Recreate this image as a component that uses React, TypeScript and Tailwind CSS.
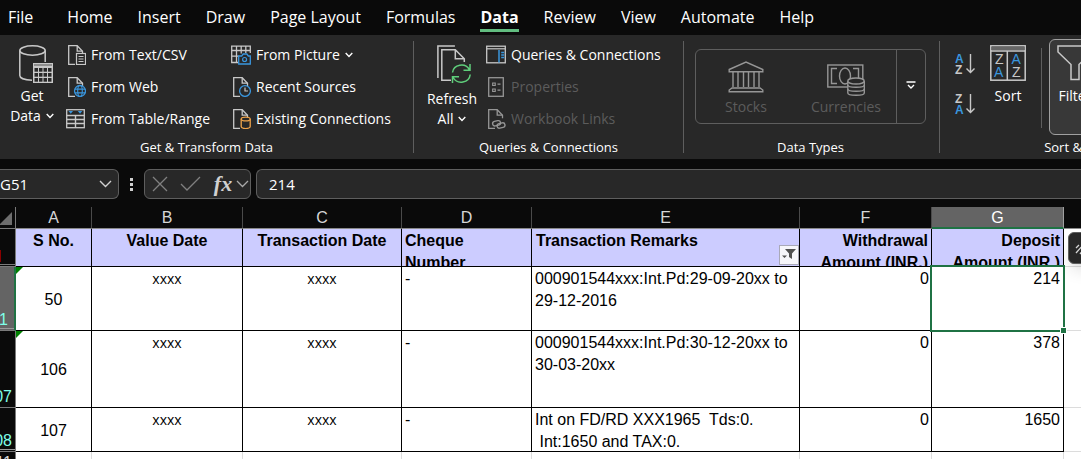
import type { ReactNode } from "react";

const LIGHT = "#c8c8c8";
const DIM = "#969696";
const BLUE = "#3a96dd";
const GREEN = "#5fce7b";
const ORANGE = "#f0a54b";
const PANEL = "#282828";

type IconProps = { children: ReactNode; w?: number; h?: number };

function Icon({ children, w = 20, h = 20 }: IconProps) {
  return (
    <svg width={w} height={h} viewBox={`0 0 ${w} ${h}`} fill="none" aria-hidden="true" className="shrink-0">
      {children}
    </svg>
  );
}

function Page({ color = LIGHT }: { color?: string }) {
  return (
    <>
      <path d="M9 19.3H2.7V.7h8.5l5.3 5.5v3" stroke={color} strokeWidth="1.3" />
      <path d="M11.2.7v5.5h5.3" stroke={color} strokeWidth="1.3" />
    </>
  );
}

function Caret() {
  return (
    <svg width="8" height="6" viewBox="0 0 8 6" fill="none" aria-hidden="true" className="shrink-0">
      <path d="M.7 1L4 4.4 7.3 1" stroke="#fff" strokeWidth="1.4" />
    </svg>
  );
}

function GetDataIcon() {
  return (
    <Icon w={34} h={38}>
      <path d="M13 35.2C5.500 35 .8 33 .8 30.500V5.500M26.200 5.500V17" stroke={LIGHT} strokeWidth="1.500" />
      <ellipse cx="13.500" cy="5.500" rx="12.700" ry="4.700" stroke={LIGHT} strokeWidth="1.500" />
      <rect x="14" y="18" width="20" height="20" fill={LIGHT} />
      <path d="M15 20h18" stroke="#555" strokeWidth="1" />
      {[23, 28, 33].map((y) =>
        [15.5, 20, 24.5, 29].map((x) => <rect key={`${x}-${y}`} x={x} y={y} width="3.500" height="3.700" fill={PANEL} />),
      )}
    </Icon>
  );
}

function TextFileIcon() {
  return (
    <Icon>
      <Page />
      <rect x="10.500" y="8.500" width="9" height="11" fill={PANEL} stroke={LIGHT} strokeWidth="1.200" />
      <path d="M12.500 11.500h5M12.500 14h5M12.500 16.500h5" stroke={LIGHT} />
    </Icon>
  );
}

function WebIcon() {
  return (
    <Icon>
      <Page />
      <circle cx="14" cy="14" r="5.500" fill={PANEL} stroke={BLUE} strokeWidth="1.300" />
      <ellipse cx="14" cy="14" rx="2.300" ry="5.500" stroke={BLUE} strokeWidth="1.100" />
      <path d="M9 12.200h10M9 15.800h10" stroke={BLUE} strokeWidth="1.200" />
    </Icon>
  );
}

function TableRangeIcon() {
  return (
    <Icon>
      <rect x=".7" y=".7" width="17.600" height="18" stroke={LIGHT} strokeWidth="1.300" />
      <path d="M.7 6.500h18M.7 10.500h18M.7 14.500h18M9.500 6.500v12" stroke={LIGHT} strokeWidth="1.400" />
      <path d="M2.500 2h4.500L4.750 4.700zM11.800 2h4.500l-2.250 2.700z" fill={BLUE} />
    </Icon>
  );
}

function PictureIcon() {
  return (
    <Icon>
      <path d="M7 17.500H.7V1.200h18.600V8M.7 5.500h18.600M.7 11.200h7M5.500 1v16.500M10.200 1v7.500M14.800 1v7" stroke={LIGHT} strokeWidth="1.300" />
      <path d="M7.700 11h3l1.500-2h3.600l1.500 2h2v8H7.700z" fill={PANEL} stroke={BLUE} strokeWidth="1.300" />
      <circle cx="13.600" cy="14.500" r="2" stroke={BLUE} strokeWidth="1.200" />
    </Icon>
  );
}

function RecentIcon() {
  return (
    <Icon>
      <Page />
      <circle cx="14" cy="14" r="5.400" fill={PANEL} stroke={BLUE} strokeWidth="1.300" />
      <path d="M14 10.500V14h3" stroke={LIGHT} strokeWidth="1.200" />
    </Icon>
  );
}

function ConnectionIcon() {
  return (
    <Icon>
      <Page />
      <path d="M10.200 10v7.500c0 2.700 9 2.700 9 0V10" fill={PANEL} stroke={ORANGE} strokeWidth="1.300" />
      <ellipse cx="14.700" cy="10" rx="4.500" ry="1.900" fill={PANEL} stroke={ORANGE} strokeWidth="1.300" />
    </Icon>
  );
}

function RefreshIcon() {
  return (
    <Icon w={34} h={38}>
      <path d="M.9 33V.9h17" stroke={LIGHT} strokeWidth="1.500" />
      <path d="M14 35.200H4.800V4.800h13.500l9 9V17M18.300 4.800v9h9" stroke={LIGHT} strokeWidth="1.500" />
      <path d="M15.500 27.500a9 8.500 0 0 1 16.800-3M33.200 29.500a9 8.500 0 0 1-17 3M33 19v6.200h-6.500M15.500 38v-6.200H22" stroke={GREEN} strokeWidth="1.500" />
    </Icon>
  );
}

function QueriesIcon() {
  return (
    <Icon>
      <rect x=".7" y="1.200" width="18.600" height="16.600" stroke={LIGHT} strokeWidth="1.300" />
      <path d="M.7 3.800h18.600" stroke={LIGHT} strokeWidth="1.200" />
      <path d="M13 5v12.500" stroke={BLUE} strokeWidth="1.500" />
      <path d="M15.200 7.500h3M15.200 10h3M15.200 12.500h3" stroke={BLUE} strokeWidth="1.300" />
    </Icon>
  );
}

function PropertiesIcon() {
  return (
    <Icon>
      <rect x="2.700" y=".7" width="14.600" height="18.600" stroke={DIM} strokeWidth="1.300" />
      <path d="M6.700 6h2.500v2.500H6.700zM6.700 12h2.500v2.500H6.700zM11.500 7.200h3M11.500 13.200h3" stroke={DIM} strokeWidth="1.200" />
    </Icon>
  );
}

function LinksIcon() {
  return (
    <Icon>
      <Page color={DIM} />
      <g stroke={DIM} strokeWidth="1.400" fill={PANEL}>
        <rect x="6.500" y="12" width="8" height="4.600" rx="2.300" transform="rotate(-12 10.500 14)" />
        <rect x="11" y="14.200" width="8" height="4.600" rx="2.300" transform="rotate(-12 15 16.500)" fill="none" />
      </g>
    </Icon>
  );
}

function StocksIcon() {
  return (
    <Icon w={36} h={32}>
      <g stroke={DIM} strokeWidth="1.400">
        <path d="M1.200 8.500L18 1l16.800 7.500v2.300H1.200z" />
        <path d="M5 11v15M10 11v15M15.500 11v15M20.500 11v15M26 11v15M31 11v15" />
        <path d="M4 27h28l2.800 2v1.800H1.200V29z" />
      </g>
    </Icon>
  );
}

function CurrenciesIcon() {
  return (
    <Icon w={38} h={32}>
      <g stroke={DIM} strokeWidth="1.400">
        <rect x=".8" y="1" width="35" height="22" />
        <path d="M10 4.500H4.500v15H10M26 4.500h5.500V14" />
        <ellipse cx="18" cy="12" rx="5.500" ry="8" />
        <path d="M20.800 17v12c0 3 16.500 3 16.500 0V17" fill={PANEL} />
        <ellipse cx="29" cy="17" rx="8.200" ry="3" fill={PANEL} />
        <path d="M20.800 21c0 3 16.500 3 16.500 0M20.800 25c0 3 16.500 3 16.500 0" />
      </g>
    </Icon>
  );
}

function SortDirectionIcon({ top, bottom, topColor, bottomColor }: { top: string; bottom: string; topColor: string; bottomColor: string }) {
  return (
    <svg width="21" height="24" viewBox="0 0 21 24" fill="none" aria-hidden="true" fontFamily="Liberation Sans, sans-serif" fontSize="12" fontWeight="700" className="overflow-visible">
      <text x="0" y="10" fill={topColor}>{top}</text>
      <text x="0" y="21" fill={bottomColor}>{bottom}</text>
      <path d="M15.500 1v18.500M11.500 15.500l4 4 4-4" stroke={LIGHT} strokeWidth="1.400" />
    </svg>
  );
}

function SortIcon() {
  return (
    <svg width="36" height="36" viewBox="0 0 36 36" fill="none" aria-hidden="true" fontFamily="Liberation Sans, sans-serif" fontSize="14">
      <rect x=".8" y=".8" width="34.400" height="34.400" stroke={LIGHT} strokeWidth="1.500" />
      <path d="M1.500 3.200h33" stroke="#666" strokeWidth="3.500" />
      <path d="M.8 6h34.400M17.300 6v29" stroke={LIGHT} strokeWidth="1.500" />
      <text x="5" y="19" fill={LIGHT}>Z</text>
      <text x="4" y="32" fill={BLUE}>A</text>
      <text x="21.500" y="19" fill={BLUE}>A</text>
      <text x="22" y="32" fill={LIGHT}>Z</text>
    </svg>
  );
}

function FilterIcon() {
  return (
    <Icon w={36} h={36}>
      <path d="M1 1h34v6L22 19.500v15h-8v-15L1 7z" stroke={LIGHT} strokeWidth="1.500" />
    </Icon>
  );
}

const tabs = ["File", "Home", "Insert", "Draw", "Page Layout", "Formulas", "Data", "Review", "View", "Automate", "Help"];

function TabBar() {
  return (
    <nav className="flex h-[35px] items-start gap-[25px] overflow-hidden pl-2">
      {tabs.map((tab) => (
        <button
          key={tab}
          className={
            tab === "Data"
              ? "h-8 shrink-0 border-b-3 border-[#62bd80] pt-1 text-base leading-6 font-bold"
              : tab === "File"
                ? "mr-[9px] h-8 shrink-0 border-b-3 border-transparent pt-1 text-base leading-6"
                : "h-8 shrink-0 border-b-3 border-transparent pt-1 text-base leading-6"
          }
        >
          {tab}
        </button>
      ))}
    </nav>
  );
}

function Command({ icon, label, disabled, menu }: { icon: ReactNode; label: string; disabled?: boolean; menu?: boolean }) {
  return (
    <button disabled={disabled} className="flex h-8 items-center gap-[5px] text-sm whitespace-nowrap disabled:text-[#5c5c5c]">
      {icon}
      {label}
      {menu && <Caret />}
    </button>
  );
}

function Group({ label, className, children }: { label: string; className: string; children: ReactNode }) {
  return (
    <section aria-label={label} className={`flex shrink-0 flex-col pt-1 ${className}`}>
      <div className="flex h-24">{children}</div>
      <h2 className="text-center text-[13px] leading-6 whitespace-nowrap">{label}</h2>
    </section>
  );
}

function Divider() {
  return <div className="my-[6px] w-px shrink-0 bg-[#5e5e5e]" />;
}

function Ribbon() {
  return (
    <div className="flex h-[124px] overflow-hidden bg-[#282828]">
      <Group label="Get & Transform Data" className="w-[413px]">
        <button className="mr-[2px] flex w-16 flex-col items-center pt-[6px] text-sm leading-5">
          <span className="pl-2"><GetDataIcon /></span>
          <span className="pt-[3px]">Get</span>
          <span className="flex items-center gap-[5px]">Data <Caret /></span>
        </button>
        <div className="flex w-[165px] flex-col">
          <Command icon={<TextFileIcon />} label="From Text/CSV" />
          <Command icon={<WebIcon />} label="From Web" />
          <Command icon={<TableRangeIcon />} label="From Table/Range" />
        </div>
        <div className="flex flex-col">
          <Command icon={<PictureIcon />} label="From Picture" menu />
          <Command icon={<RecentIcon />} label="Recent Sources" />
          <Command icon={<ConnectionIcon />} label="Existing Connections" />
        </div>
      </Group>
      <Divider />
      <Group label="Queries & Connections" className="w-[269px]">
        <button className="flex w-[72px] flex-col items-center pt-[6px] pl-1 text-sm leading-5">
          <span className="pl-1"><RefreshIcon /></span>
          <span className="pt-[6px]">Refresh</span>
          <span className="flex items-center gap-[5px]">All <Caret /></span>
        </button>
        <div className="flex flex-col">
          <Command icon={<QueriesIcon />} label="Queries & Connections" />
          <Command icon={<PropertiesIcon />} label="Properties" disabled />
          <Command icon={<LinksIcon />} label="Workbook Links" disabled />
        </div>
      </Group>
      <Divider />
      <Group label="Data Types" className="w-[255px] pr-[13px] pl-[11px]">
        <div className="mt-[10px] flex h-[75px] w-full rounded-md border border-[#5e5e5e]">
          <button disabled className="flex flex-1 flex-col items-center gap-1 pt-[11px] text-sm leading-5 text-[#5c5c5c]">
            <StocksIcon />
            Stocks
          </button>
          <button disabled className="flex flex-1 flex-col items-center gap-px pt-[14px] text-sm leading-5 text-[#5c5c5c]">
            <CurrenciesIcon />
            Currencies
          </button>
          <button aria-label="More data types" className="flex w-[29px] items-center justify-center border-l border-[#5e5e5e] pb-1">
            <svg width="10" height="8" viewBox="0 0 10 8" fill="none" aria-hidden="true">
              <path d="M.5 1h9M2 4l3 3 3-3" stroke="#fff" strokeWidth="1.400" />
            </svg>
          </button>
        </div>
      </Group>
      <Divider />
      <Group label="Sort & Filter" className="w-[280px]">
        <div className="flex w-12 flex-col items-center gap-4 pt-[14px] pl-[3px]">
          <button aria-label="Sort A to Z"><SortDirectionIcon top="A" bottom="Z" topColor={BLUE} bottomColor={LIGHT} /></button>
          <button aria-label="Sort Z to A"><SortDirectionIcon top="Z" bottom="A" topColor={LIGHT} bottomColor={BLUE} /></button>
        </div>
        <button className="flex w-[40px] flex-col items-center gap-[5px] pt-[6px] text-sm leading-5">
          <SortIcon />
          Sort
        </button>
        <div className="mt-[9px] mr-[7px] ml-[13px] h-20 w-px bg-[#5e5e5e]" />
        <button className="flex w-[52px] flex-col items-center gap-[5px] rounded-md border border-[#a0a0a0] bg-[#383838] pt-[5px] text-sm leading-5">
          <FilterIcon />
          Filter
        </button>
      </Group>
    </div>
  );
}

function FormulaBar() {
  return (
    <div className="flex h-12 items-start overflow-hidden pt-[10px]">
      <label className="flex h-[30px] w-[119px] shrink-0 items-center rounded-r-md border border-l-0 border-[#5e5e5e] bg-[#282828] pr-[6px]">
        <input aria-label="Name box" defaultValue="G51" className="w-full min-w-0 bg-transparent text-[15px] outline-none" />
        <svg width="13" height="8" viewBox="0 0 13 8" fill="none" aria-hidden="true" className="shrink-0">
          <path d="M1 1l5.500 5.500L12 1" stroke="#d0d0d0" strokeWidth="1.400" />
        </svg>
      </label>
      <div className="flex h-[30px] w-[25px] shrink-0 flex-col items-center justify-center gap-[2px]">
        <i className="size-[3px] bg-[#d0d0d0]" />
        <i className="size-[3px] bg-[#d0d0d0]" />
        <i className="size-[3px] bg-[#d0d0d0]" />
      </div>
      <div className="flex h-[30px] w-[107px] shrink-0 items-center rounded-md border border-[#5e5e5e] bg-[#282828] pl-[7px]">
        <button aria-label="Cancel">
          <svg width="16" height="16" viewBox="0 0 16 16" fill="none" aria-hidden="true">
            <path d="M1 1l14 14M15 1L1 15" stroke="#808080" strokeWidth="1.300" />
          </svg>
        </button>
        <button aria-label="Enter" className="ml-3">
          <svg width="21" height="16" viewBox="0 0 21 16" fill="none" aria-hidden="true">
            <path d="M1 8l6 6L20 1" stroke="#808080" strokeWidth="1.300" />
          </svg>
        </button>
        <button aria-label="Insert function" className="ml-3 w-5 font-['Liberation_Serif',serif] text-[22px] leading-6 font-bold text-[#d0d0d0] italic">
          fx
        </button>
        <button aria-label="Function menu" className="ml-[3px]">
          <svg width="13" height="8" viewBox="0 0 13 8" fill="none" aria-hidden="true">
            <path d="M1 1l5.500 5.500L12 1" stroke="#a8a8a8" strokeWidth="1.300" />
          </svg>
        </button>
      </div>
      <input
        aria-label="Formula"
        defaultValue="214"
        className="ml-[5px] h-[30px] min-w-0 flex-1 rounded-l-md border border-r-0 border-[#5e5e5e] bg-[#282828] pl-3 text-[15px] outline-none"
      />
    </div>
  );
}

type Row = { index: string; height: string; serial: string; remarks: string[]; withdrawal: string; deposit: string; selected?: boolean; flagged?: boolean };

const rows: Row[] = [
  { index: "51", height: "h-16", serial: "50", remarks: ["000901544xxx:Int.Pd:29-09-20xx to", "29-12-2016"], withdrawal: "0", deposit: "214", selected: true, flagged: true },
  { index: "107", height: "h-[77px]", serial: "106", remarks: ["000901544xxx:Int.Pd:30-12-20xx to", "30-03-20xx"], withdrawal: "0", deposit: "378", flagged: true },
  { index: "108", height: "h-[44px]", serial: "107", remarks: ["Int on FD/RD XXX1965  Tds:0.", " Int:1650 and TAX:0."], withdrawal: "0", deposit: "1650" },
];

const cell = "relative border-r border-b border-black pt-px pb-0 align-top";
const heading = "relative border-r border-b border-black bg-[#ccccff] p-0 align-top font-bold";
const clip = "h-[37px] overflow-hidden px-[3px] pt-px";

function Sheet() {
  return (
    <table className="w-full table-fixed border-separate border-spacing-0 bg-white font-['Liberation_Sans',Arial,sans-serif] text-base leading-[22px] text-black">
      <colgroup>
        <col className="w-4" />
        <col className="w-[76px]" />
        <col className="w-[151px]" />
        <col className="w-[159px]" />
        <col className="w-[130px]" />
        <col className="w-[268px]" />
        <col className="w-[132px]" />
        <col className="w-[132px]" />
        <col />
      </colgroup>
      <thead>
        <tr className="h-[22px] bg-[#0a0a0a] text-[#d6d6d6]">
          <td className="border-r border-b border-[#7a7a7a] p-0">
            <svg width="15" height="20" viewBox="0 0 15 20" aria-hidden="true" className="block">
              <path d="M12 4v13H0V16z" fill="#6e6e6e" />
            </svg>
          </td>
          {["A", "B", "C", "D", "E", "F"].map((c) => (
            <th key={c} scope="col" className="border-r border-b border-r-[#4a4a4a] border-b-[#8a8a8a] px-0 pt-px pb-0 leading-5 font-normal">{c}</th>
          ))}
          <th scope="col" className="border-r border-b-2 border-r-[#a0a0a0] border-b-[#1f7244] bg-[#646464] px-0 pt-px pb-0 leading-[19px] font-normal text-white">G</th>
          <td className="border-b border-[#8a8a8a] p-0" />
        </tr>
      </thead>
      <tbody>
        <tr className="h-[38px]">
          <td className="relative border-r border-b border-[#7a7a7a] bg-[#0a0a0a] p-0">
            <span className="absolute bottom-1 left-0 h-3 w-px bg-[#8b0000]" />
            <span className="absolute bottom-[1px] left-0 h-px w-full bg-[#7a7a7a]" />
          </td>
          <th className={heading}><div className={clip}>S No.</div></th>
          <th className={heading}><div className={clip}>Value Date</div></th>
          <th className={heading}><div className={clip}>Transaction Date</div></th>
          <th className={heading}><div className={`${clip} text-left`}>Cheque<br />Number</div></th>
          <th className={heading}>
            <div className={`${clip} pl-1 text-left`}>Transaction Remarks</div>
            <button aria-label="Filter remarks" className="absolute right-0 bottom-[1px] flex size-5 items-center justify-center border border-[#a9a9b8] bg-[#f6f6fa] pb-[2px]">
              <svg width="14" height="12" viewBox="0 0 14 12" aria-hidden="true">
                <path d="M3 1h11L10 5.500V11L7 9V5.500z" fill="#505050" />
                <path d="M0 7.500h5L2.500 10z" fill="#505050" />
              </svg>
            </button>
          </th>
          <th className={heading}><div className={`${clip} text-right`}>Withdrawal<br />Amount (INR.)</div></th>
          <th className={heading}><div className={`${clip} text-right`}>Deposit<br />Amount (INR.)</div></th>
          <td className="relative border-b border-[#dcdcdc] p-0">
            <button aria-label="Analysis options" className="absolute top-[3px] left-1 flex h-8 w-[34px] items-center rounded-md border border-[#5e5e5e] bg-[#282828] pl-[6px] shadow-lg">
              <svg width="18" height="18" viewBox="0 0 18 18" fill="none" aria-hidden="true">
                <path d="M1 9l3-3M1 14l8-9M5 15l5-6M9 9l5 6" stroke="#d6d6d6" strokeWidth="1.300" />
              </svg>
            </button>
          </td>
        </tr>
        {rows.map((row) => (
          <tr key={row.index} className={row.height}>
            <th
              scope="row"
              className={
                row.selected
                  ? "relative overflow-hidden border-r-2 border-b border-r-[#1f7244] border-b-[#7a7a7a] bg-[#646464] p-0 align-bottom font-normal text-[#7fffe8]"
                  : "relative overflow-hidden border-r border-b border-[#7a7a7a] bg-[#0a0a0a] p-0 align-bottom font-normal text-[#7fffe8]"
              }
            >
              <div className={row.selected ? "flex justify-end pr-[6px] leading-5" : "flex justify-end pr-[3px] leading-5"}>{row.index}</div>
              {row.index !== "107" && <span className="absolute bottom-[1px] left-0 h-px w-full bg-[#9a9a9a]" />}
            </th>
            <td className="relative border-r border-b border-black px-0 pt-[2px] pb-0 text-center align-middle">
              {row.flagged && (
                <svg width="8" height="8" viewBox="0 0 8 8" aria-hidden="true" className="absolute top-0 left-0">
                  <path d="M0 0h7L0 7z" fill="#008000" />
                </svg>
              )}
              {row.serial}
            </td>
            <td className={`${cell} px-0 text-center font-['Open_Sans',sans-serif] text-sm leading-[22px]`}>xxxx</td>
            <td className={`${cell} px-0 text-center font-['Open_Sans',sans-serif] text-sm leading-[22px]`}>xxxx</td>
            <td className={`${cell} px-[3px]`}>-</td>
            <td className={`${cell} px-[3px] whitespace-pre`}>
              <div className="h-[42px]">{row.remarks.join("\n")}</div>
            </td>
            <td className={`${cell} pr-[2px] pl-0 text-right`}>{row.withdrawal}</td>
            <td className={`${cell} pr-[3px] pl-0 text-right`}>
              {row.selected && (
                <span className="absolute -inset-[2px] z-10 border-2 border-[#1f7244]">
                  <i className="absolute -right-1 -bottom-1 size-[7px] border border-white bg-[#1f7244]" />
                </span>
              )}
              {row.deposit}
            </td>
            <td className="border-b border-[#dcdcdc] p-0" />
          </tr>
        ))}
        <tr className="h-[22px]">
          <th scope="row" className="overflow-hidden border-r border-[#7a7a7a] bg-[#0a0a0a] p-0 font-normal text-[#d6d6d6]">
            <div className="flex justify-end pr-[3px]">111</div>
          </th>
          {["A", "B", "C", "D", "E", "F", "G"].map((c) => (
            <td key={c} className="border-r border-[#dcdcdc] p-0" />
          ))}
          <td className="p-0" />
        </tr>
      </tbody>
    </table>
  );
}

export default function App() {
  return (
    <div className="h-screen overflow-hidden bg-[#0a0a0a] font-['Open_Sans','Noto_Sans',sans-serif] text-white">
      <TabBar />
      <Ribbon />
      <FormulaBar />
      <Sheet />
    </div>
  );
}
